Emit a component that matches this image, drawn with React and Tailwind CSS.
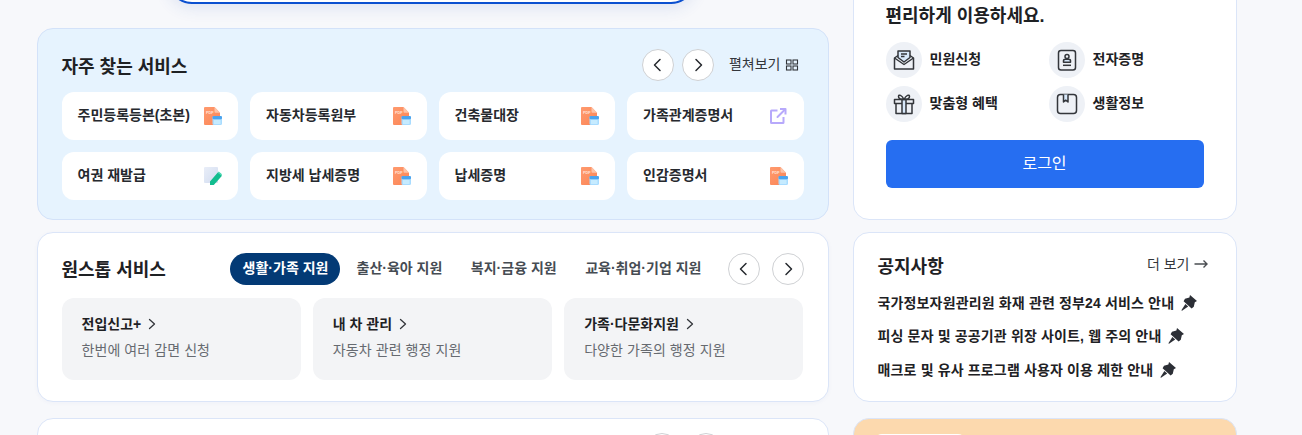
import React from "react";

function Chevron({ dir }) {
  return (
    <svg width="16" height="16" viewBox="0 0 16 16" fill="none" stroke="#26292e" strokeWidth="1.5" strokeLinecap="round" strokeLinejoin="round">
      <path d={dir === "left" ? "M10 2.5 4.5 8l5.5 5.5" : "M6 2.5 11.5 8 6 13.5"} />
    </svg>
  );
}

function CircleBtn({ dir }) {
  return (
    <button className="w-8 h-8 rounded-full bg-white border border-[#cfd1d4] flex items-center justify-center shrink-0">
      <Chevron dir={dir} />
    </button>
  );
}

function PdfIcon() {
  return (
    <svg width="18" height="18" viewBox="0 0 18 18" className="shrink-0">
      <defs>
        <linearGradient id="pdfg" x1="0" y1="0" x2="1" y2="1">
          <stop offset="0" stopColor="#ff9a6e" />
          <stop offset="1" stopColor="#fb8556" />
        </linearGradient>
      </defs>
      <path d="M1 0h9.5L16 5.8V17a1 1 0 0 1-1 1H1a1 1 0 0 1-1-1V1a1 1 0 0 1 1-1z" fill="url(#pdfg)" />
      <path d="M10.5 0 16 5.8h-4.5a1 1 0 0 1-1-1z" fill="#fdc4a8" />
      <text x="2" y="7" fontSize="3.8" fontWeight="700" fill="#ffe4d6" fontFamily="'Liberation Sans',sans-serif">PDF</text>
      <rect x="8.5" y="9" width="9.5" height="9" rx="1.5" fill="#a9dcff" />
      <rect x="8.5" y="9" width="9.5" height="3.2" rx="1.2" fill="#4aa3ee" />
      <rect x="10" y="13" width="6.5" height="4" fill="#c6ebff" />
    </svg>
  );
}

function EditIcon() {
  return (
    <svg width="18" height="18" viewBox="0 0 18 18" className="shrink-0">
      <defs>
        <linearGradient id="edg" x1="0" y1="0" x2="1" y2="1">
          <stop offset="0" stopColor="#e9eef8" />
          <stop offset="1" stopColor="#d2dcf0" />
        </linearGradient>
      </defs>
      <rect x="0" y="0" width="14" height="16" rx="1" fill="url(#edg)" />
      <path d="M6 18v-3.6L13.8 5.5 18 8.7l-8 9a1 1 0 0 1-.8.3z" fill="#12bd8f" />
      <path d="M13.8 5.5l.9-1 3.3 2.8-.9 1.1z" fill="#3fd5ad" />
    </svg>
  );
}

function LinkIcon() {
  return (
    <svg width="18" height="18" viewBox="0 0 18 18" fill="none" stroke="#b7a9fb" strokeWidth="2" className="shrink-0" strokeLinejoin="round">
      <path d="M7.5 3.5H1.5a.5.5 0 0 0-.5.5v11.5a.5.5 0 0 0 .5.5H13a.5.5 0 0 0 .5-.5V10" />
      <path d="M7.5 10 15 2.5" strokeLinecap="round" />
      <path d="M10 2h5.5v5.5" />
    </svg>
  );
}

function GridIcon() {
  return (
    <svg width="14" height="14" viewBox="0 0 14 14" fill="none" stroke="#33363b" strokeWidth="1.1" className="shrink-0">
      <rect x="1.5" y="2" width="4.5" height="4" />
      <rect x="8" y="2" width="4.5" height="4" />
      <rect x="1.5" y="8" width="4.5" height="4" />
      <rect x="8" y="8" width="4.5" height="4" />
    </svg>
  );
}

function MailIcon() {
  return (
    <svg width="22" height="22" viewBox="0 0 22 22" fill="none" stroke="#33363b" strokeWidth="1.5" strokeLinejoin="round">
      <path d="M5 8.5V2h12v6.5L11 13z" fill="#d8e9fb" />
      <path d="M8 5h6M8 7.5h3.5" />
      <path d="M5 6.5 1.5 9v11h19V9L17 6.5" />
      <path d="M1.5 9 11 15.5 20.5 9" />
    </svg>
  );
}

function GiftIcon() {
  return (
    <svg width="22" height="22" viewBox="0 0 22 22" fill="none" stroke="#33363b" strokeWidth="1.5" strokeLinejoin="round">
      <rect x="1.5" y="6.5" width="19" height="4" />
      <path d="M3 10.5V20.5h16V10.5" />
      <rect x="9" y="6.5" width="4" height="14" fill="#d8e9fb" />
      <path d="M11 6.5C9 2 5.5 1 5.5 3.5c0 2 3 3 5.5 3zM11 6.5C13 2 16.5 1 16.5 3.5c0 2-3 3-5.5 3z" />
    </svg>
  );
}

function StampIcon() {
  return (
    <svg width="20" height="22" viewBox="0 0 20 22" fill="none" stroke="#33363b" strokeWidth="1.5" strokeLinejoin="round">
      <rect x="1.5" y="1.5" width="17" height="19.5" rx="2.5" />
      <circle cx="10" cy="7.5" r="2" />
      <path d="M6.5 13.2h7v-1.4c0-.8-1-1.6-2-1.6h-3c-1 0-2 .8-2 1.6z" fill="#d8e9fb" />
      <path d="M6 16.3h8" />
    </svg>
  );
}

function BookIcon() {
  return (
    <svg width="22" height="22" viewBox="0 0 22 22" fill="none" stroke="#33363b" strokeWidth="1.5" strokeLinejoin="round">
      <rect x="1.5" y="1.5" width="19" height="19" rx="3" />
      <path d="M7.5 1.5v7.5l2.2-1.8L12 9V1.5" fill="#d8e9fb" />
    </svg>
  );
}

function PinIcon() {
  return (
    <svg width="16" height="16" viewBox="0 0 16 16" className="shrink-0" fill="#2c2f36">
      <path d="M9 0 16 6 13.8 7.2 12.8 11.8 10.6 13.4 2.6 6.2 4 3.8 8.4 2.4z" />
      <path d="M4.4 9 7.2 11.6 1 15.8 0.4 15.2z" />
    </svg>
  );
}

function Tile({ label, icon }) {
  return (
    <div className="h-12 bg-white rounded-xl px-4 flex items-center justify-between">
      <span className="text-[14px] leading-5 font-semibold text-[#26292e] -mt-[2px]">{label}</span>
      {icon === "pdf" ? <PdfIcon /> : icon === "edit" ? <EditIcon /> : <LinkIcon />}
    </div>
  );
}

function Service({ title, desc }) {
  return (
    <div className="h-[82px] bg-[#f3f4f6] rounded-xl pl-5 pt-4">
      <div className="flex items-center gap-[6px] text-[14px] leading-5 font-semibold text-[#1e2124]">
        {title}
        <svg width="10" height="12" viewBox="0 0 10 12" fill="none" stroke="#33363b" strokeWidth="1.3" strokeLinecap="round" strokeLinejoin="round"><path d="M2.5 1.5 7.5 6l-5 4.5" /></svg>
      </div>
      <div className="mt-[6px] text-[14px] leading-5 text-[#666a70] tracking-[0.08px]">{desc}</div>
    </div>
  );
}

function Quick({ label, children }) {
  return (
    <div className="flex items-center gap-2">
      <div className="w-9 h-9 rounded-full bg-[#eef1f6] flex items-center justify-center">{children}</div>
      <span className="text-[14px] font-semibold text-[#1e2124] -mt-[2px]">{label}</span>
    </div>
  );
}

function Notice({ text }) {
  return (
    <div className="flex items-center gap-[7px] h-[33.5px]">
      <span className="text-[14px] font-semibold text-[#1e2124] leading-5 tracking-[0.15px]">{text}</span>
      <PinIcon />
    </div>
  );
}

export default function App() {
  return (
    <div className="h-[435px] w-[1302px] overflow-hidden bg-[#f7f8fb] flex items-start gap-6 pl-[36.5px] font-['Liberation_Sans','Noto_Sans_CJK_KR',sans-serif]">
      <div className="w-[792px] shrink-0 flex flex-col">
        <div className="-mt-[57px] mb-6 ml-[131px] w-[527px] h-[61px] rounded-[24px] bg-white border-[2.5px] border-[#0b50d0] shadow-[0_4px_16px_rgba(40,80,180,0.12)]" />

        <section className="h-[192px] rounded-2xl bg-[#e6f3fe] border border-[#d3e2f9] pt-5 px-6">
          <div className="h-8 flex items-center justify-between">
            <h2 className="text-[18px] font-semibold text-[#1e2124] mt-1">자주 찾는 서비스</h2>
            <div className="flex items-center">
              <div className="flex gap-2 mr-[15px]">
                <CircleBtn dir="left" />
                <CircleBtn dir="right" />
              </div>
              <span className="text-[14px] text-[#33363b] mr-1 -mt-[2px]">펼쳐보기</span>
              <GridIcon />
              <span className="w-[5px]" />
            </div>
          </div>
          <div className="mt-[11px] grid grid-cols-4 gap-3">
            <Tile label="주민등록등본(초본)" icon="pdf" />
            <Tile label="자동차등록원부" icon="pdf" />
            <Tile label="건축물대장" icon="pdf" />
            <Tile label="가족관계증명서" icon="link" />
            <Tile label="여권 재발급" icon="edit" />
            <Tile label="지방세 납세증명" icon="pdf" />
            <Tile label="납세증명" icon="pdf" />
            <Tile label="인감증명서" icon="pdf" />
          </div>
        </section>

        <section className="mt-3 h-[170px] rounded-2xl bg-white border border-[#dbe5f8] pt-5 px-6 shadow-[0_1px_4px_rgba(40,80,180,0.04)]">
          <div className="h-8 flex items-center">
            <h2 className="w-[168px] text-[18px] font-semibold text-[#1e2124] mt-[2px]">원스톱 서비스</h2>
            <div className="flex items-center flex-1">
              <span className="h-8 w-[110px] rounded-full bg-[#033a75] text-white text-[14px] font-semibold flex items-center justify-center pb-px pl-[2px]">생활·가족 지원</span>
              <span className="ml-[17px] -mt-px text-[14px] font-semibold text-[#464c53]">출산·육아 지원</span>
              <span className="ml-[28.5px] -mt-px text-[14px] font-semibold text-[#464c53]">복지·금융 지원</span>
              <span className="ml-[28.5px] -mt-px text-[14px] font-semibold text-[#464c53]">교육·취업·기업 지원</span>
            </div>
            <div className="flex gap-3">
              <CircleBtn dir="left" />
              <CircleBtn dir="right" />
            </div>
          </div>
          <div className="mt-[13px] grid grid-cols-3 gap-3">
            <Service title="전입신고+" desc="한번에 여러 감면 신청" />
            <Service title="내 차 관리" desc="자동차 관련 행정 지원" />
            <Service title="가족·다문화지원" desc="다양한 가족의 행정 지원" />
          </div>
        </section>

        <section className="mt-4 h-[100px] rounded-2xl bg-white border border-[#dbe5f8] pt-[14px] pr-[106px] flex justify-end gap-3">
          <div className="w-8 h-8 rounded-full border border-[#cfd1d4]" />
          <div className="w-8 h-8 rounded-full border border-[#cfd1d4]" />
        </section>
      </div>

      <div className="w-[384px] shrink-0 flex flex-col">
        <section className="-mt-[100px] h-[320px] rounded-2xl bg-white border border-[#dbe5f8] pt-[104px] px-8">
          <h2 className="text-[18px] font-semibold leading-[22px] text-[#1e2124]">편리하게 이용하세요.</h2>
          <div className="mt-[15px] grid grid-cols-[163px_1fr] gap-y-2">
            <Quick label="민원신청"><MailIcon /></Quick>
            <Quick label="전자증명"><StampIcon /></Quick>
            <Quick label="맞춤형 혜택"><GiftIcon /></Quick>
            <Quick label="생활정보"><BookIcon /></Quick>
          </div>
          <button className="mt-[18px] w-[318px] h-12 rounded-md bg-[#266ef1] text-white text-[16px] flex items-center justify-center">로그인</button>
        </section>

        <section className="mt-3 h-[170px] rounded-2xl bg-white border border-[#dbe5f8] pt-[18px] pl-6 pr-7">
          <div className="flex items-center justify-between h-7">
            <h2 className="text-[18px] font-semibold text-[#1e2124] mt-1">공지사항</h2>
            <span className="flex items-center gap-1 text-[14px] text-[#33363b] -mt-[2px]">
              더 보기
              <svg width="14" height="10" viewBox="0 0 14 10" fill="none" stroke="#4a4d52" strokeWidth="1.4"><path d="M0.5 5h12.5M9.5 1.5 13 5 9.5 8.5" /></svg>
            </span>
          </div>
          <div className="mt-[7px] flex flex-col">
            <Notice text="국가정보자원관리원 화재 관련 정부24 서비스 안내" />
            <Notice text="피싱 문자 및 공공기관 위장 사이트, 웹 주의 안내" />
            <Notice text="매크로 및 유사 프로그램 사용자 이용 제한 안내" />
          </div>
        </section>

        <section className="mt-4 h-[100px] rounded-2xl bg-[#fcd9ae] border border-[#dbe5f8] pt-[15px] pl-5">
          <div className="w-[92px] h-8 rounded-lg bg-white" />
        </section>
      </div>
    </div>
  );
}
